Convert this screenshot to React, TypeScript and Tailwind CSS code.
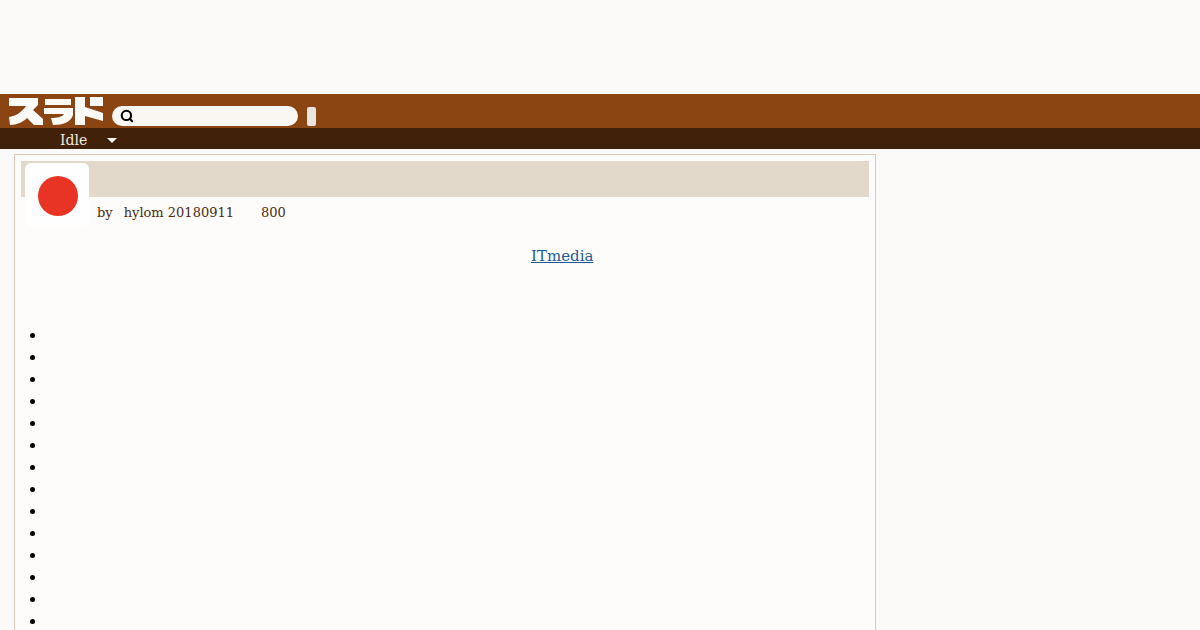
import React from 'react';
import { Search } from 'lucide-react';

const serif = { fontFamily: '"DejaVu Serif", serif' };

function Logo() {
  return (
    <svg width="96" height="30" viewBox="0 0 96 30" className="shrink-0">
      <g fill="#fdfbf7">
        <path d="M1 2H30V9L25 14L35 23V29H26L19 22C15 26 9 29 2 29L1 21C8 20 14 16 18 10H1Z" />
        <path d="M37 3H63V9H37ZM36 12H65V19C63 26 55 29 45 29L43 22C49 22 54 21 56 18H36Z" />
        <path d="M67 1H77V11L95 17V25L77 20V29H67Z" />
        <path d="M82 1H95V10H82Z" />
      </g>
    </svg>
  );
}

export default function App() {
  return (
    <div className="h-[630px] overflow-hidden bg-[#fbfaf8] text-[14px]" style={serif}>
      <div className="h-[94px]" />
      <header className="h-[34px] bg-[#8b4513] flex items-start pl-2 pt-[2px]">
        <Logo />
        <div className="ml-2 mt-[10px] w-[186px] h-5 rounded-full bg-[#faf6f1] flex items-center pl-2">
          <Search className="w-[14px] h-[14px] text-black" strokeWidth={3.5} />
        </div>
        <div className="ml-[9px] mt-[11px] w-[9px] h-[19px] rounded-[2px] bg-[#e8e4df]" />
      </header>
      <nav className="h-[21px] bg-[#42210b] flex items-center pl-[60px] pt-[3px] text-[#f5ebdc]">
        <span>Idle</span>
        <span className="ml-[20px] w-0 h-0 border-x-[5px] border-x-transparent border-t-[5px] border-t-[#fbfaf8]" />
      </nav>
      <main className="ml-[14px] mt-[5px] w-[862px] h-[600px] border border-[#e0c9bb] bg-[#fdfcfa] px-[6px] pt-[6px] relative">
        <div className="h-[36px] bg-[#e3d9ca]" />
        <div className="absolute left-[10px] top-[8px] w-[64px] h-[64px] rounded-md bg-[#fffefe] flex items-center justify-center">
          <div className="w-10 h-10 rounded-full bg-[#e83424] translate-x-px translate-y-px" />
        </div>
        <div className="pl-[76px] mt-[7px] text-[13px] leading-[18px] text-[#4b2a12] flex">
          <span>by</span>
          <span className="ml-[11px]">hylom 20180911</span>
          <span className="ml-[27px]">800</span>
        </div>
        <div className="mt-[24px] pl-[510px] leading-[20px]">
          <a href="#" className="text-[15px] text-[#1d5a9a] underline">ITmedia</a>
        </div>
        <ul className="list-disc ml-[26px] mt-[59px] text-[16px] leading-[22px] text-black">
          {Array.from({ length: 14 }).map((_, i) => (
            <li key={i} className="h-[22px]">&nbsp;</li>
          ))}
        </ul>
      </main>
    </div>
  );
}
